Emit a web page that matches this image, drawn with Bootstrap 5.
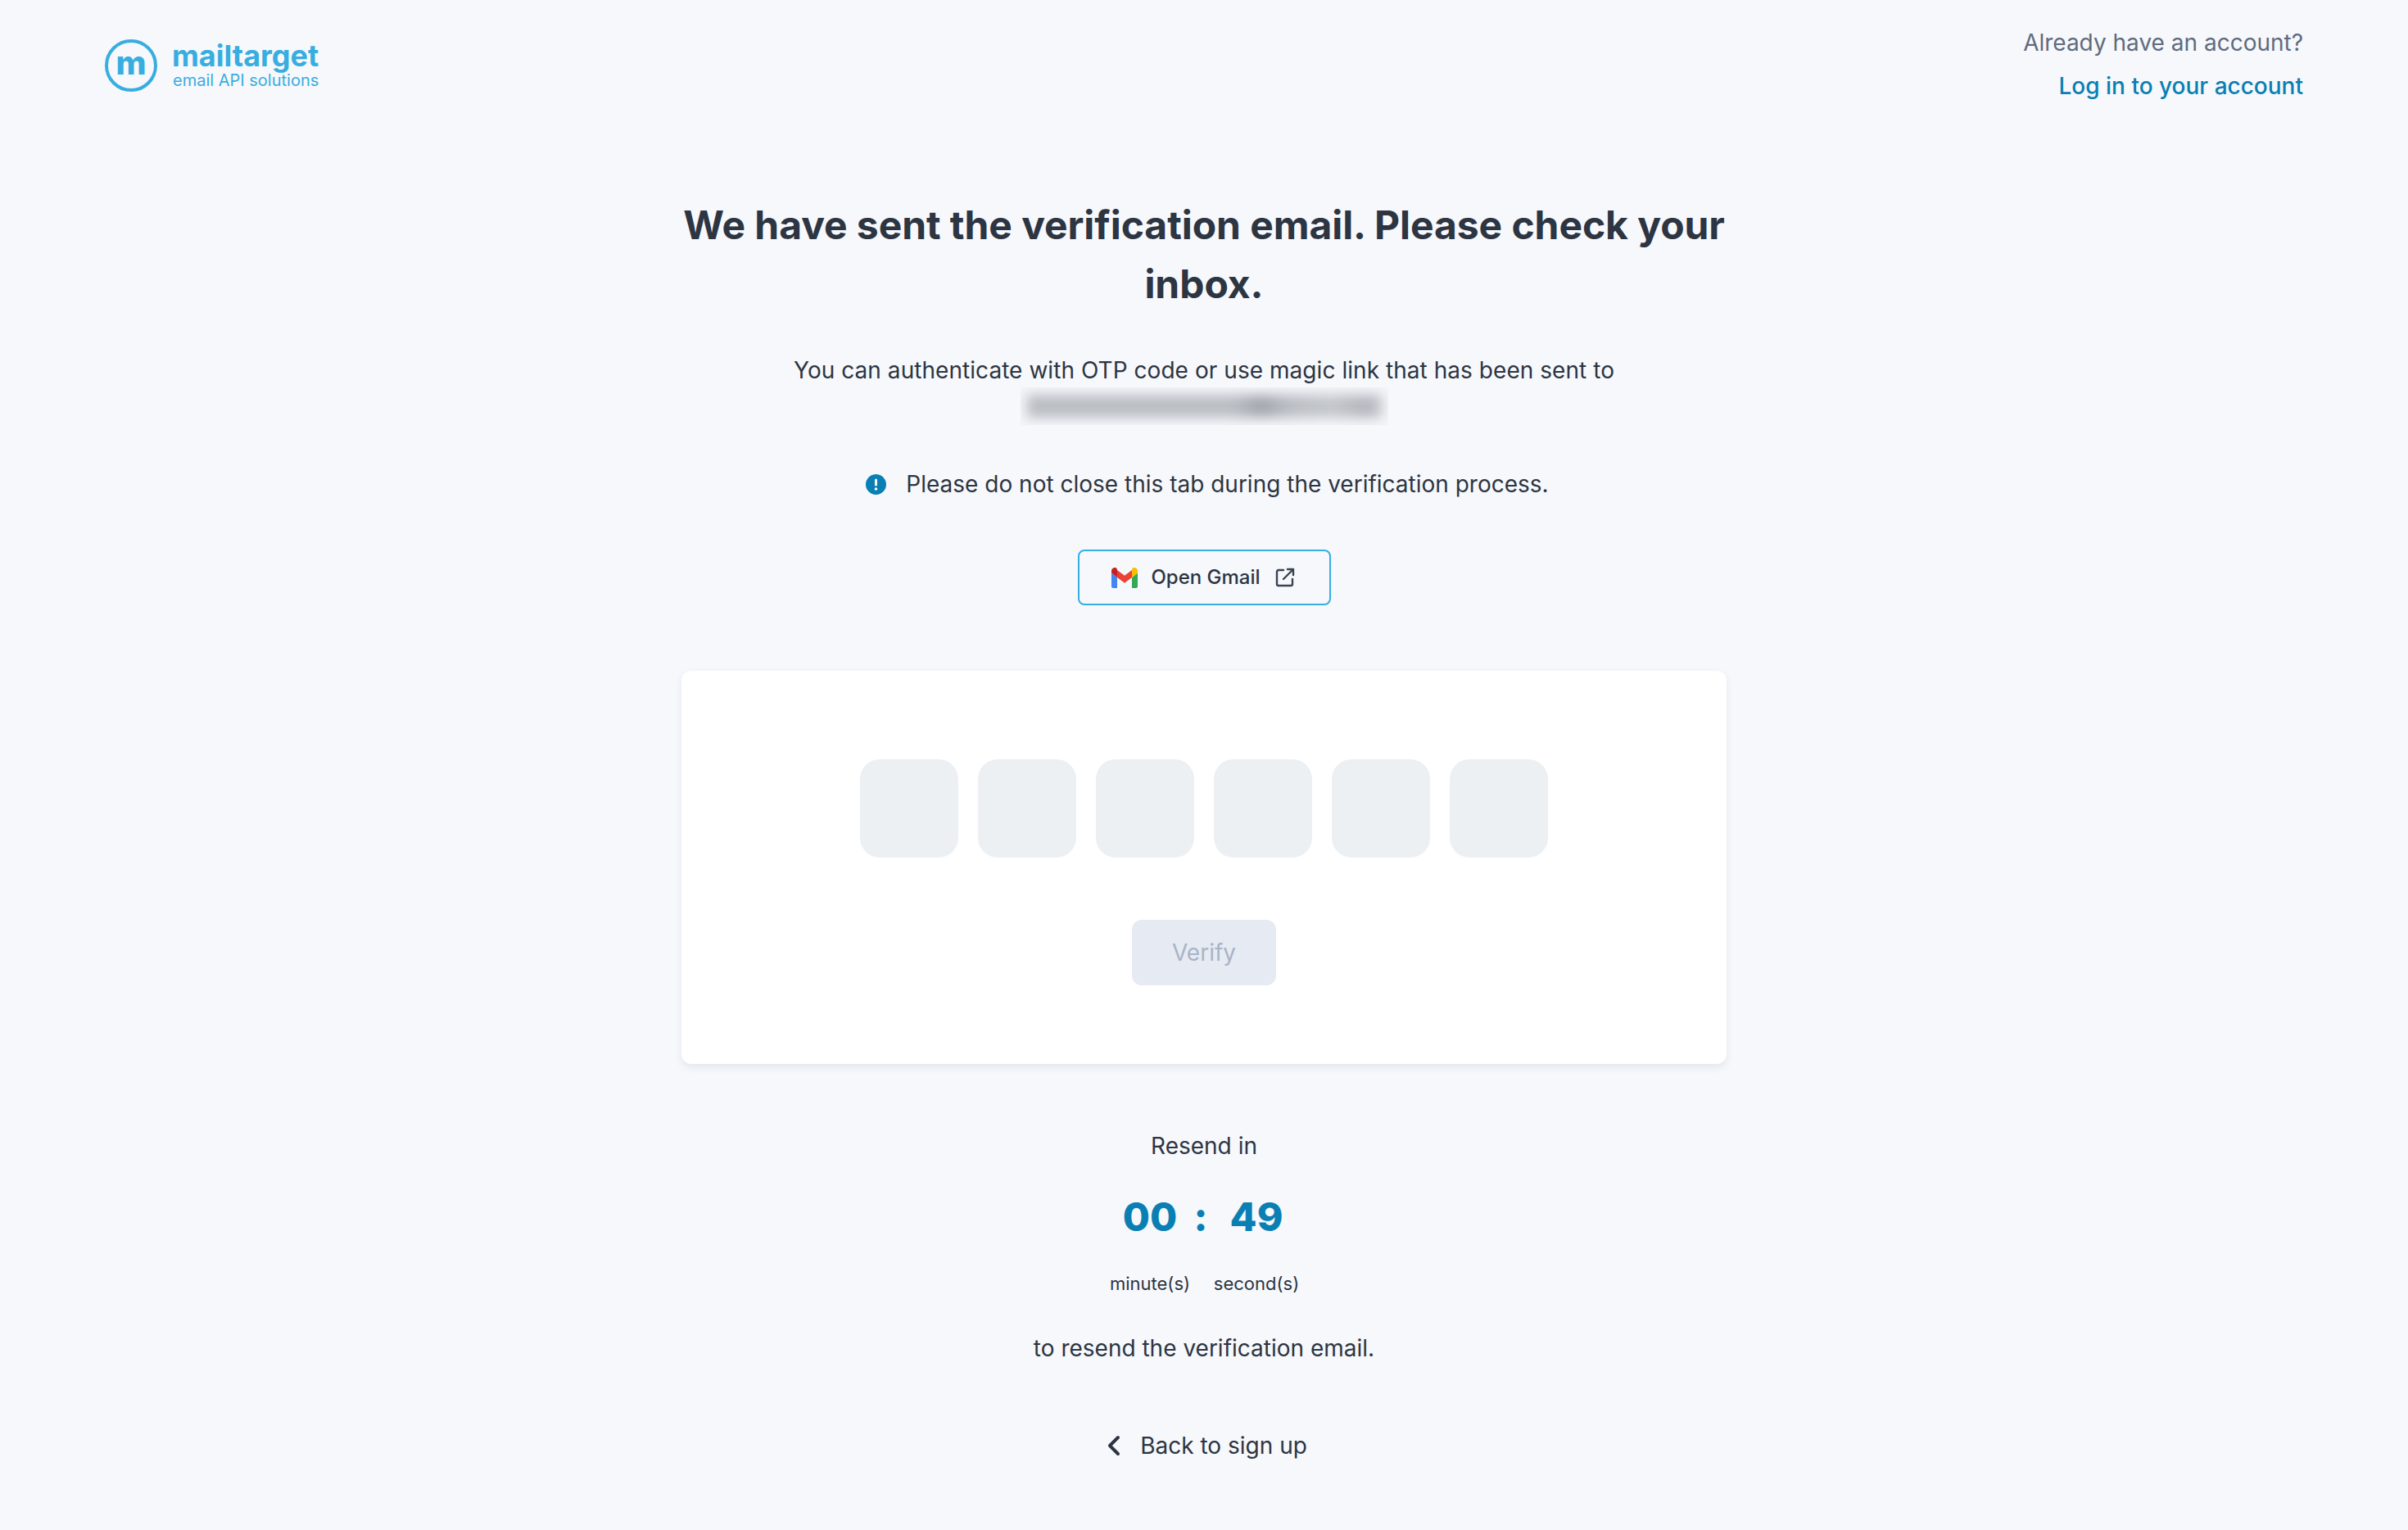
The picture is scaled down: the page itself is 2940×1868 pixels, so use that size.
<!DOCTYPE html>
<html lang="en">
<head>
  <meta charset="UTF-8" />
  <meta name="viewport" content="width=device-width, initial-scale=1.0"/>
  <title>Verify email</title>
  <link href="https://cdn.jsdelivr.net/npm/bootstrap@5.3.3/dist/css/bootstrap.min.css" rel="stylesheet"/>
  <style>
    body { background: #f6f8fc; color: #2d3542; font-family: Inter, "Liberation Sans", sans-serif; font-size: 28px; line-height: 44px; }
    .top-bar { padding: 30px 128px 0; height: 239px; }
    .top-links { line-height: 53px; margin-top: -4px; }
    .already { color: #5f6b7e; }
    .login-link { color: #0a7fb3; font-weight: 500; text-decoration: none; }
    .brand-link { margin-top: 18px; gap: 18px; }
    .brand-ring { width: 64px; height: 64px; border: 4px solid #38ade0; border-radius: 50%; color: #38ade0; font-weight: 800; font-size: 40px; line-height: 50px; }
    .brand-name { color: #38ade0; font-weight: 700; font-size: 36px; line-height: 36px; }
    .brand-sub { color: #38ade0; font-size: 20px; line-height: 24px; padding-left: 1px; }
    .main-col { width: 1276px; }
    .main-title { font-size: 48px; font-weight: 700; line-height: 72px; color: #2d3542; margin-bottom: 47px; letter-spacing: -0.06px; }
    .sent-line { letter-spacing: 0.05px; }
    .blur-box { width: 449px; height: 46px; overflow: hidden; background: #f3f5f9; margin: -1px auto 0; padding: 9px 8px; }
    .blur-smear { height: 28px; background: linear-gradient(90deg, #bbbec4 0 58%, #a3a6ad 66%, #bbbec4 74%, #c4c7cc 86%, #b4b7bd 95%, #c2c5ca 100%); filter: blur(7px); }
    .info-line { margin-top: 50px; line-height: 44px; padding-left: 8px; }
    .gmail-btn { width: 309px; height: 68px; margin-top: 58px; border: 2px solid #38ade0; border-radius: 8px; color: #2d3542; font-size: 24px; font-weight: 500; background: transparent; padding: 0 2px 0 0; }
    .ext-icon { margin-left: 18px; }
    .otp-card { height: 480px; margin-top: 80px; border: 0; border-radius: 12px; box-shadow: 0 4px 10px rgba(60, 70, 100, .1); padding-top: 108px; }
    .otp-cell { width: 120px; height: 120px; border-radius: 24px; background: #edf0f3; border: 0; }
    .verify-btn { width: 176px; height: 80px; margin-top: 76px; border: 0; border-radius: 12px; background: #e6eaf3; color: #a9b4c6; font-size: 28px; padding: 0; }
    .verify-btn:disabled { background: #e6eaf3; color: #a9b4c6; opacity: 1; }
    .resend-in { margin-top: 78px; }
    .timer-row { padding-right: 2px; }
    .timer-digits { color: #0a7fb3; font-size: 48px; font-weight: 800; line-height: 60px; margin-top: 35px; }
    .timer-col { width: 130px; }
    .timer-sep { width: 0; display: flex; justify-content: center; padding-right: 3px; box-sizing: content-box; margin-left: -3px; }
    .timer-label { font-size: 22px; line-height: 30px; margin-top: 36px; white-space: nowrap; }
    .resend-after { margin-top: 42px; }
    .back-link { color: #2d3542; text-decoration: none; margin-top: 75px; padding-left: 8px; }
  </style>
</head>
<body>
  <header class="top-bar d-flex justify-content-between align-items-start">
    <a class="brand-link d-flex align-items-center text-decoration-none" href="#">
      <span class="brand-ring d-flex justify-content-center flex-shrink-0">m</span>
      <span class="d-block">
        <span class="brand-name d-block">mailtarget</span>
        <span class="brand-sub d-block">email API solutions</span>
      </span>
    </a>
    <div class="top-links text-end">
      <div class="already">Already have an account?</div>
      <a class="login-link" href="#">Log in to your account</a>
    </div>
  </header>

  <main class="main-col mx-auto text-center">
    <h1 class="main-title">We have sent the verification email. Please check your inbox.</h1>
    <p class="sent-line mb-0">You can authenticate with OTP code or use magic link that has been sent to</p>
    <div class="blur-box"><div class="blur-smear"></div></div>

    <div class="info-line d-flex justify-content-center align-items-center gap-4">
      <svg width="25" height="25" viewBox="0 0 25 25"><circle cx="12.5" cy="12.5" r="12.5" fill="#0a7fb3"/><rect x="11" y="5.5" width="3" height="9" rx="1.5" fill="#fff"/><circle cx="12.5" cy="18" r="1.8" fill="#fff"/></svg>
      <span>Please do not close this tab during the verification process.</span>
    </div>

    <button type="button" class="btn gmail-btn d-inline-flex align-items-center justify-content-center">
      <svg class="me-3" width="32" height="25" viewBox="0 0 32 25">
        <path d="M2 25h5V12L0 6.500V23a2 2 0 0 0 2 2z" fill="#4285f4"/>
        <path d="M25 25h5a2 2 0 0 0 2-2V6.500L25 12z" fill="#34a853"/>
        <path d="M25 3v9l7-5.500V4c0-3.300-3.700-5.200-6.400-3.200z" fill="#fbbc04"/>
        <path d="M7 12V3l9 6.800L25 3v9l-9 6.800z" fill="#ea4335"/>
        <path d="M0 4v2.500L7 12V3L6.400.8C3.700-1.200 0 .7 0 4z" fill="#c5221f"/>
      </svg>
      <span>Open Gmail</span>
      <svg class="ext-icon" width="24" height="24" viewBox="0 0 24 24" fill="none" stroke="#3a4452" stroke-width="2.400" stroke-linecap="round" stroke-linejoin="round"><path d="M10 3H4a2 2 0 0 0-2 2v15a2 2 0 0 0 2 2h15a2 2 0 0 0 2-2v-6"/><path d="M15 2h7v7M22 2 10 14"/></svg>
    </button>

    <div class="card otp-card align-items-center">
      <div class="d-flex gap-4">
        <input class="otp-cell" type="text" maxlength="1" aria-label="Digit 1">
        <input class="otp-cell" type="text" maxlength="1" aria-label="Digit 2">
        <input class="otp-cell" type="text" maxlength="1" aria-label="Digit 3">
        <input class="otp-cell" type="text" maxlength="1" aria-label="Digit 4">
        <input class="otp-cell" type="text" maxlength="1" aria-label="Digit 5">
        <input class="otp-cell" type="text" maxlength="1" aria-label="Digit 6">
      </div>
      <button type="button" class="btn verify-btn" disabled>Verify</button>
    </div>

    <div class="resend-in">Resend in</div>
    <div class="timer-row d-flex justify-content-center">
      <div class="timer-col">
        <div class="timer-digits">00</div>
        <div class="timer-label">minute(s)</div>
      </div>
      <div class="timer-sep"><div class="timer-digits">:</div></div>
      <div class="timer-col">
        <div class="timer-digits">49</div>
        <div class="timer-label">second(s)</div>
      </div>
    </div>
    <div class="resend-after">to resend the verification email.</div>
    <a class="back-link d-inline-flex align-items-center gap-4" href="#">
      <svg width="16" height="26" viewBox="0 0 16 26" fill="none" stroke="#2d3542" stroke-width="4" stroke-linecap="round" stroke-linejoin="round"><path d="M13 3 3 13l10 10"/></svg>
      <span>Back to sign up</span>
    </a>
  </main>

  <script src="https://cdn.jsdelivr.net/npm/bootstrap@5.3.3/dist/js/bootstrap.bundle.min.js"></script>
</body>
</html>
